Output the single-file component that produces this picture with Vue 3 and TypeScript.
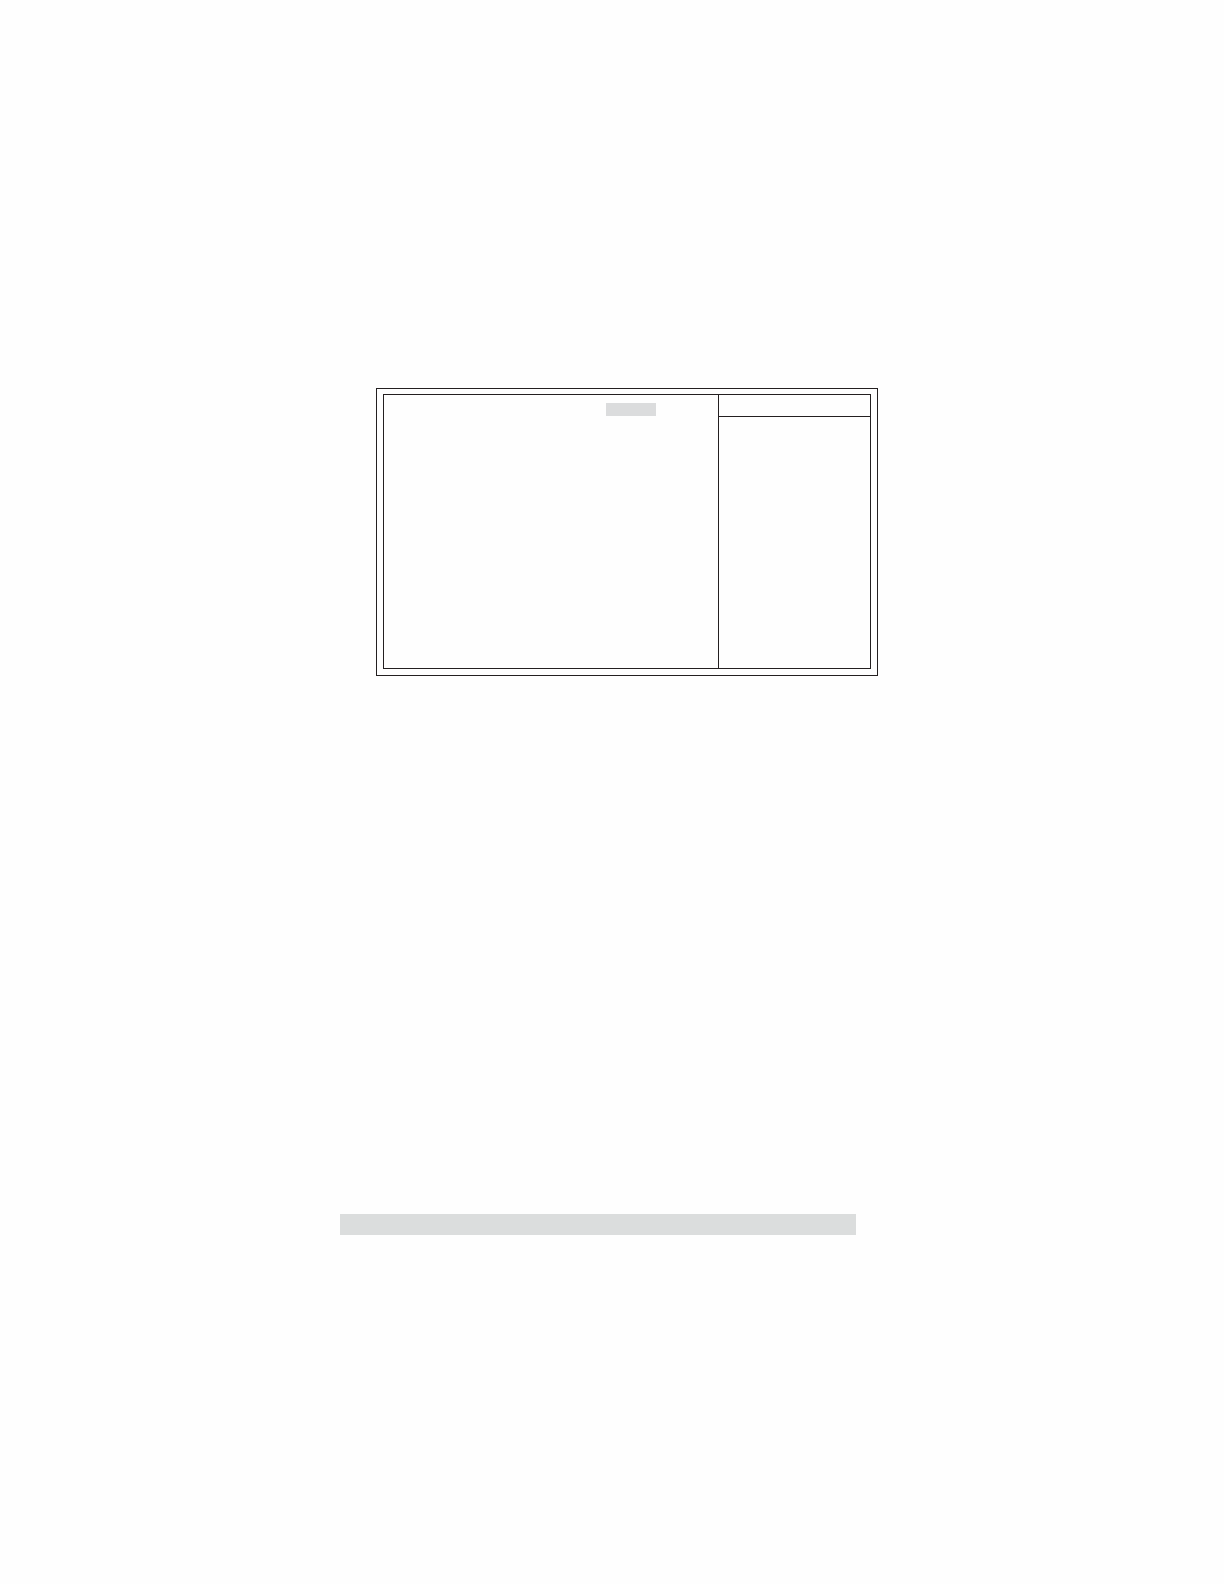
<script setup lang="ts">
</script>

<template>
  <main class="page">
    <section class="frame">
      <div class="panel">
        <div class="settings">
          <div class="selected"></div>
        </div>
        <aside class="help">
          <div class="help-head"></div>
        </aside>
      </div>
    </section>
    <div class="note"></div>
  </main>
</template>

<style>
body {
  background: #fefefe;
}
</style>

<style scoped>
.page {
  box-sizing: border-box;
  min-height: 100vh;
  padding: 388px 346px 0 340px;
  font-family: "Liberation Sans", Arial, sans-serif;
}

.frame {
  margin-left: 36px;
  padding: 5px 6px 6px;
  border: 1px solid #231f20;
}

.panel {
  display: grid;
  grid-template-columns: 1fr 152px;
  min-height: 273px;
  border: 1px solid #231f20;
}

.settings {
  display: flex;
  justify-content: flex-end;
  align-items: flex-start;
  padding: 8px 62px 8px 8px;
}

.selected {
  width: 50px;
  height: 13px;
  background: #dbdcdd;
}

.help {
  border-left: 1px solid #231f20;
}

.help-head {
  height: 21px;
  border-bottom: 1px solid #231f20;
}

.note {
  height: 21px;
  margin: 538px 22px 0 0;
  background: #dbdddd;
}
</style>
